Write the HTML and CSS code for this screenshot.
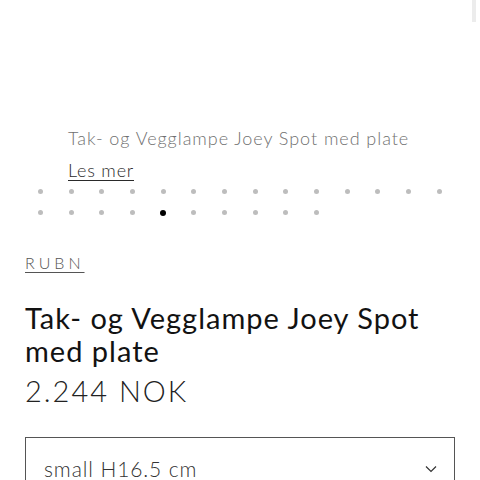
FILE: index.html
```html
<!DOCTYPE html>
<html lang="no">
<head>
<meta charset="utf-8">
<title>Tak- og Vegglampe Joey Spot med plate</title>
<link rel="stylesheet" href="styles.css">
</head>
<body>
<div class="hero">
  <span class="edge"></span>
</div>
<div class="caption">
  <p class="caption-text">Tak- og Vegglampe Joey Spot med plate</p>
  <a class="more" href="#">Les mer</a>
</div>
<div class="dots">
  <span class="dot"></span><span class="dot"></span><span class="dot"></span><span class="dot"></span><span class="dot"></span><span class="dot"></span><span class="dot"></span><span class="dot"></span><span class="dot"></span><span class="dot"></span><span class="dot"></span><span class="dot"></span><span class="dot"></span><span class="dot"></span>
  <span class="dot"></span><span class="dot"></span><span class="dot"></span><span class="dot"></span><span class="dot active"></span><span class="dot"></span><span class="dot"></span><span class="dot"></span><span class="dot"></span><span class="dot"></span>
</div>
<div class="info">
  <a class="vendor" href="#">RUBN</a>
  <h1 class="title">Tak- og Vegglampe Joey Spot med plate</h1>
  <p class="price">2.244 NOK</p>
  <div class="select">
    <span class="select-value">small H16.5 cm</span>
    <svg class="chev" width="12" height="8" viewBox="0 0 12 8"><path d="M1 1.5 L6 6.5 L11 1.5" fill="none" stroke="#333" stroke-width="1.2"/></svg>
  </div>
</div>
</body>
</html>
```

FILE: styles.css
```css
html, body {
  margin: 0;
  padding: 0;
  background: #fff;
  font-family: Lato, "Open Sans", sans-serif;
  color: #121212;
  overflow: hidden;
}
.hero {
  height: 124px;
  position: relative;
}
.edge {
  position: absolute;
  right: 4px;
  top: 0;
  width: 4px;
  height: 22px;
  background: #ececec;
}
.caption {
  padding-left: 68px;
}
.caption-text {
  margin: 0;
  font-size: 18px;
  line-height: 28px;
  letter-spacing: 0.95px;
  color: #707070;
  font-weight: 300;
}
.more {
  display: inline-block;
  margin-top: 7px;
  font-size: 18px;
  line-height: 22px;
  letter-spacing: 0.8px;
  color: #2a2a2a;
  text-decoration: underline;
  text-underline-offset: 3px;
  text-decoration-thickness: 1px;
  font-weight: 300;
}
.dots {
  display: flex;
  flex-wrap: wrap;
  margin: 0 25px;
  width: 430px;
}
.dot {
  width: 30.7px;
  height: 21px;
  display: flex;
  align-items: center;
  justify-content: center;
}
.dot::before {
  content: "";
  width: 5px;
  height: 5px;
  border-radius: 50%;
  background: #bdbdbd;
}
.dot.active::before {
  width: 6px;
  height: 6px;
  background: #000;
}
.info {
  padding: 28px 25px 0;
}
.vendor {
  display: inline-block;
  font-size: 16px;
  line-height: 24px;
  letter-spacing: 4px;
  color: #555;
  font-weight: 300;
  text-decoration: underline;
  text-underline-offset: 3px;
  text-decoration-thickness: 1px;
}
.title {
  margin: 26px 0 0;
  font-size: 29px;
  font-weight: 400;
  line-height: 33px;
  letter-spacing: 1px;
  color: #121212;
}
.price {
  margin: 6px 0 0;
  font-size: 29px;
  line-height: 36px;
  letter-spacing: 2px;
  font-weight: 300;
  color: #222;
}
.select {
  margin-top: 28px;
  border: 1.5px solid #555;
  display: flex;
  align-items: center;
  justify-content: space-between;
  padding: 16px 17px 18px 18px;
}
.select-value {
  font-size: 21px;
  line-height: 30px;
  letter-spacing: 0.9px;
  color: #333;
  font-weight: 300;
}
```
